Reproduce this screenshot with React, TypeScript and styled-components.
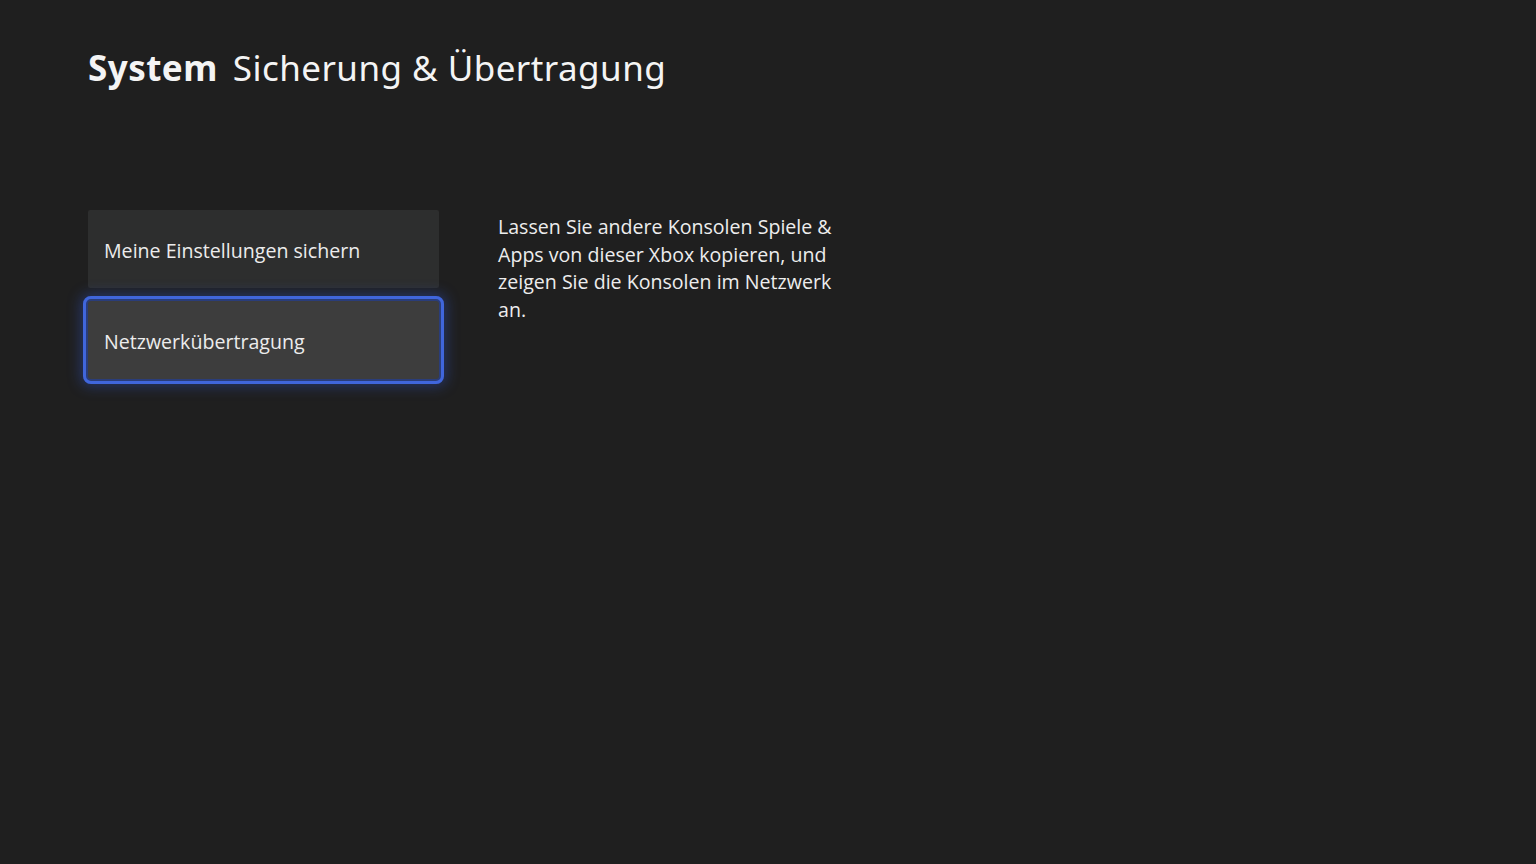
import React from "react";
import styled, { createGlobalStyle } from "styled-components";

const Global = createGlobalStyle`
  html, body { margin: 0; padding: 0; background: #1f1f1f; }
  body { font-family: "Open Sans", "Noto Sans", sans-serif; color: #f2f2f2; }
`;

const Page = styled.div`
  width: 1536px;
  height: 864px;
  background: #1f1f1f;
  box-sizing: border-box;
  padding: 42px 0 0 88px;
  overflow: hidden;
`;

const Title = styled.h1`
  margin: 0;
  font-family: "Noto Sans", "Open Sans", sans-serif;
  font-size: 35px;
  font-weight: 400;
  line-height: 52px;
  color: #f4f4f4;
  display: flex;
  gap: 15px;
  letter-spacing: 0.45px;
`;

const Strong = styled.span`
  font-weight: 700;
`;

const Content = styled.div`
  display: flex;
  gap: 59px;
  margin-top: 116px;
`;

const List = styled.div`
  display: flex;
  flex-direction: column;
  gap: 13px;
  width: 351px;
`;

const Item = styled.div<{ $focused?: boolean }>`
  height: 78px;
  box-sizing: border-box;
  padding: 3px 0 0 16px;
  display: flex;
  align-items: center;
  font-family: "Open Sans", sans-serif;
  font-size: 19.6px;
  color: #ececec;
  background: ${(p) => (p.$focused ? "#3d3d3d" : "#2d2e2e")};
  border-radius: 2px;
  ${(p) =>
    p.$focused
      ? `
    outline: 3px solid #4066dc;
    outline-offset: 2px;
    box-shadow: 0 0 0 5px #2a3d7a, 0 0 14px 7px rgba(50, 90, 220, 0.4);
    border-radius: 3px;
  `
      : ""}
`;

const Description = styled.p`
  margin: 0;
  width: 352px;
  padding-top: 3px;
  font-family: "Open Sans", sans-serif;
  font-size: 19.6px;
  line-height: 27.5px;
  color: #ededed;
`;

export default function App() {
  return (
    <>
      <Global />
      <Page>
        <Title>
          <Strong>System</Strong>
          <span>Sicherung &amp; Übertragung</span>
        </Title>
        <Content>
          <List>
            <Item>Meine Einstellungen sichern</Item>
            <Item $focused>Netzwerkübertragung</Item>
          </List>
          <Description>
            Lassen Sie andere Konsolen Spiele &amp; Apps von dieser Xbox kopieren, und zeigen Sie die Konsolen im Netzwerk an.
          </Description>
        </Content>
      </Page>
    </>
  );
}
